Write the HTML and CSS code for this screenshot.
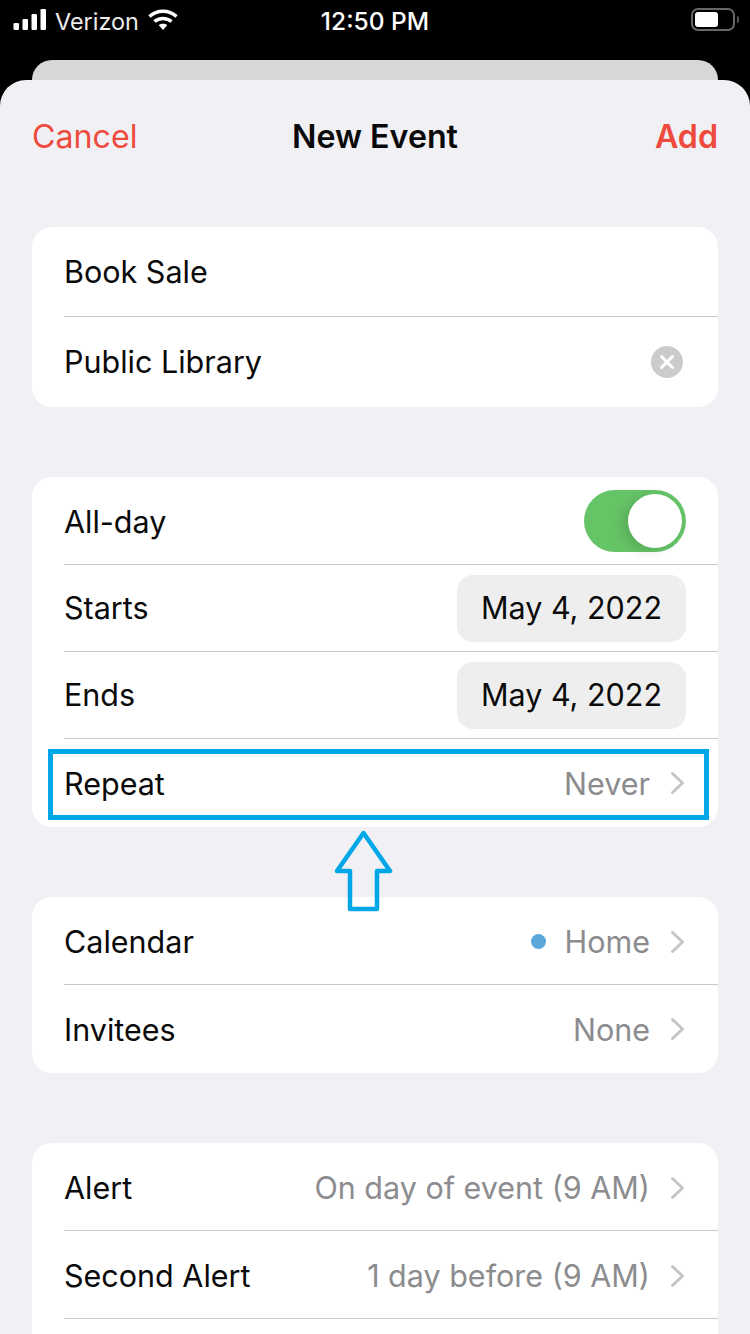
FILE: index.html
```html
<!DOCTYPE html>
<html>
    <head>
        <link rel="stylesheet" href="styles.css">
    </head>
    <body>
        <div class="statusBar">
            <div class="statusLeft">
                <svg class="signal" width="34" height="22" viewBox="0 0 34 22">
                    <rect x="0.5" y="14" width="5.5" height="7" rx="1.2"/>
                    <rect x="9.5" y="10" width="5.5" height="11" rx="1.2"/>
                    <rect x="18.5" y="5" width="5.5" height="16" rx="1.2"/>
                    <rect x="27.5" y="0" width="5.5" height="21" rx="1.2"/>
                </svg>
                <span>Verizon</span>
                <svg class="wifi" width="30" height="22" viewBox="0 0 30 22">
                    <path d="M1.5 7.5C9 .5 21 .5 28.5 7.5" />
                    <path d="M6.5 12.5C11 8.4 19 8.4 23.5 12.5" />
                    <path class="wifiDot" d="M10.8 16.2C13 14.4 17 14.4 19.2 16.2L15 21Z" />
                </svg>
            </div>
            <div class="time">12:50 PM</div>
            <div class="battery">
                <div class="batteryFill"></div>
            </div>
            <div class="batteryNub"></div>
        </div>
        <div class="backCard"></div>

        <div class="sheet">
            <div class="nav">
                <span class="navBtn">Cancel</span>
                <span class="navTitle">New Event</span>
                <span class="navBtn navAdd">Add</span>
            </div>

            <div class="group">
                <div class="row rowTall"><span>Book Sale</span></div>
                <div class="row rowTall">
                    <span class="labelUp">Public Library</span>
                    <svg class="clear" width="32" height="32" viewBox="0 0 32 32">
                        <circle cx="16" cy="16" r="16" fill="#cbcbcd"/>
                        <path d="M10.5 10.5L21.500 21.500M21.500 10.500L10.500 21.500" stroke="#fff" stroke-width="3" stroke-linecap="round"/>
                    </svg>
                </div>
            </div>

            <div class="group">
                <div class="row rowAllDay">
                    <span class="label">All-day</span>
                    <div class="toggle"><div class="knob"></div></div>
                </div>
                <div class="row rowDate">
                    <span class="labelUp">Starts</span>
                    <span class="datePill">May 4, 2022</span>
                </div>
                <div class="row rowDate">
                    <span class="labelUp">Ends</span>
                    <span class="datePill">May 4, 2022</span>
                </div>
                <div class="row">
                    <span>Repeat</span>
                    <span class="value">Never<svg class="chev" width="15" height="24" viewBox="0 0 15 24"><path d="M2.500 2.500L12.500 12L2.500 21.500"/></svg></span>
                </div>
            </div>

            <div class="group">
                <div class="row">
                    <span class="label">Calendar</span>
                    <span class="value valueDown"><i class="calDot"></i>Home<svg class="chev" width="15" height="24" viewBox="0 0 15 24"><path d="M2.500 2.500L12.500 12L2.500 21.500"/></svg></span>
                </div>
                <div class="row">
                    <span>Invitees</span>
                    <span class="value">None<svg class="chev" width="15" height="24" viewBox="0 0 15 24"><path d="M2.500 2.500L12.500 12L2.500 21.500"/></svg></span>
                </div>
            </div>

            <div class="group groupCut">
                <div class="row">
                    <span class="label">Alert</span>
                    <span class="value valueDown">On day of event (9 AM)<svg class="chev" width="15" height="24" viewBox="0 0 15 24"><path d="M2.500 2.500L12.500 12L2.500 21.500"/></svg></span>
                </div>
                <div class="row">
                    <span class="label">Second Alert</span>
                    <span class="value valueDown">1 day before (9 AM)<svg class="chev" width="15" height="24" viewBox="0 0 15 24"><path d="M2.500 2.500L12.500 12L2.500 21.500"/></svg></span>
                </div>
                <div class="row rowCut"></div>
            </div>
        </div>

        <div class="highlight"></div>
        <svg class="arrow" width="60" height="82" viewBox="0 0 60 82">
            <path d="M30.500 3L57 41H44V79H17V41H4Z"/>
        </svg>
    </body>
</html>
```

FILE: styles.css
```css
* {
    box-sizing: border-box;
}

html, body {
    margin: 0;
    padding: 0;
}

body {
    position: relative;
    width: 750px;
    height: 1334px;
    overflow: hidden;
    background: #000;
    font-family: Inter, "Liberation Sans", sans-serif;
    font-size: 30.5px;
    color: #0a0a0a;
}

.statusBar {
    position: relative;
    height: 60px;
    color: #fff;
}

.statusLeft {
    position: absolute;
    left: 13px;
    top: 9px;
    display: flex;
    align-items: flex-start;
    font-size: 23.4px;
    line-height: 26px;
    color: #ececec;
}

.statusLeft span {
    margin-left: 8px;
}

.signal {
    fill: #fff;
}

.wifi {
    margin-left: 9px;
    fill: none;
    stroke: #fff;
    stroke-width: 3.400;
}

.wifiDot {
    fill: #fff;
    stroke: none;
}

.time {
    position: absolute;
    left: 0;
    right: 0;
    top: 8px;
    text-align: center;
    font-size: 24.5px;
    line-height: 26px;
    font-weight: 500;
}

.battery {
    position: absolute;
    left: 691px;
    top: 8px;
    width: 44px;
    height: 23px;
    border: 2px solid #666;
    border-radius: 7px;
    padding: 2px;
}

.batteryFill {
    width: 23px;
    height: 15px;
    background: #fff;
    border-radius: 3px;
}

.batteryNub {
    position: absolute;
    left: 737px;
    top: 16px;
    width: 2px;
    height: 7px;
    background: #555;
    border-radius: 0 2px 2px 0;
}

.backCard {
    height: 20px;
    margin: 0 32px;
    background: #d7d7d7;
    border-radius: 20px 20px 0 0;
}

.sheet {
    height: 1254px;
    padding: 0 32px;
    background: #f1f0f5;
    border-radius: 26px 26px 0 0;
}

.nav {
    display: grid;
    grid-template-columns: 1fr auto 1fr;
    align-items: center;
    height: 112px;
    margin-bottom: 35px;
    font-size: 32.2px;
}

.navBtn {
    color: #ee4b3e;
}

.navAdd {
    font-weight: 600;
    text-align: right;
}

.navTitle {
    font-weight: 600;
}

.group {
    margin-bottom: 70px;
    padding-left: 32px;
    background: #fff;
    border-radius: 20px;
}

.groupCut {
    margin-bottom: 0;
    border-radius: 20px 20px 0 0;
}

.row {
    display: flex;
    justify-content: space-between;
    align-items: center;
    height: 88px;
    border-bottom: 1px solid #c8c8ca;
}

.row:last-child {
    border-bottom: 0;
}

/* Inter sits a pixel off from the original font in some rows */
.label,
.valueDown {
    position: relative;
    top: 1px;
}

.labelUp {
    position: relative;
    top: -1px;
}

.rowTall {
    height: 90px;
}

.rowAllDay {
    padding-right: 32px;
}

.rowDate {
    height: 87px;
    padding-right: 32px;
}

.rowCut {
    height: 15px;
}

.clear {
    margin-right: 35px;
}

.toggle {
    width: 102px;
    height: 62px;
    padding: 4px;
    background: #65c466;
    border-radius: 31px;
    display: flex;
    justify-content: flex-end;
}

.knob {
    width: 54px;
    height: 54px;
    background: #fff;
    border-radius: 50%;
    box-shadow: -6px 3px 12px rgba(0, 0, 0, 0.12);
}

.datePill {
    display: flex;
    align-items: center;
    height: 67px;
    padding: 0 24px 2px;
    background: #eeeeef;
    border-radius: 16px;
}

.value {
    display: flex;
    align-items: center;
    padding-right: 33px;
    color: #8c8c8f;
}

.chev {
    margin-left: 20px;
    fill: none;
    stroke: #c5c5c8;
    stroke-width: 3;
    stroke-linecap: round;
    stroke-linejoin: round;
}

.calDot {
    width: 15px;
    height: 15px;
    margin-right: 19px;
    background: #5aa7db;
    border-radius: 50%;
}

.highlight {
    position: absolute;
    left: 48px;
    top: 749px;
    width: 661px;
    height: 71px;
    border: 5px solid #00a7e8;
}

.arrow {
    position: absolute;
    left: 333px;
    top: 830px;
    fill: none;
    stroke: #00a7e8;
    stroke-width: 4.500;
    stroke-linejoin: round;
}
```
